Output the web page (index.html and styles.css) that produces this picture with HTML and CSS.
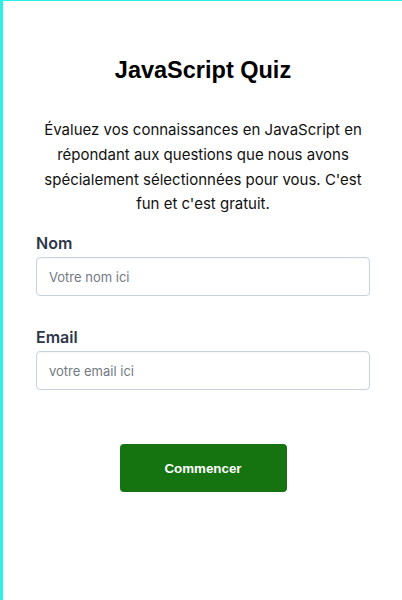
FILE: index.html
```html
<!DOCTYPE html>
<html lang="fr">
<head>
<meta charset="utf-8">
<title>JavaScript Quiz</title>
<link rel="stylesheet" href="styles.css">
</head>
<body>
<div class="page">
  <main class="quiz">
    <h1 class="title">JavaScript Quiz</h1>
    <p class="intro">Évaluez vos connaissances en JavaScript en répondant aux questions que nous avons spécialement sélectionnées pour vous. C'est fun et c'est gratuit.</p>
    <form class="form">
      <div class="field">
        <label class="label" for="nom">Nom</label>
        <input class="input" id="nom" type="text" placeholder="Votre nom ici">
      </div>
      <div class="field">
        <label class="label" for="email">Email</label>
        <input class="input" id="email" type="email" placeholder="votre email ici">
      </div>
      <div class="actions">
        <button class="btn" type="button">Commencer</button>
      </div>
    </form>
  </main>
</div>
</body>
</html>
```
FILE: styles.css
```css
* { box-sizing: border-box; }
html, body { margin: 0; padding: 0; background: #fff; }
.page {
  min-height: 600px;
  border-top: 1px solid #2bf0e6;
  border-left: 3px solid #2bf0e6;
  padding-left: 1px;
  font-family: Inter, "Noto Sans", sans-serif;
}
.quiz {
  width: 334px;
  margin: 0 auto;
  padding-top: 55px;
}
.title {
  margin: 0;
  font-family: "Liberation Sans", Arial, sans-serif;
  font-weight: 700;
  font-size: 23.5px;
  line-height: 28px;
  text-align: center;
  color: #000;
}
.intro {
  margin: 34px 0 0;
  font-size: 15px;
  line-height: 24.75px;
  text-align: center;
  color: #111;
}
.form {
  margin-top: 16px;
  display: flex;
  flex-direction: column;
  gap: 31px;
}
.field { display: flex; flex-direction: column; gap: 4px; }
.label {
  font-size: 16px;
  font-weight: 600;
  line-height: 20px;
  color: #2d3748;
}
.input {
  height: 39px;
  width: 100%;
  padding: 0 12px;
  border: 1px solid #c9d3df;
  border-radius: 4px;
  font-family: Inter, "Noto Sans", sans-serif;
  font-size: 13px;
  color: #333;
  background: #fff;
  box-shadow: inset 0 1px 2px rgba(0,0,0,0.04);
  outline: none;
}
.input::placeholder { color: #727a84; }
.actions { display: flex; justify-content: center; margin-top: 23px; }
.btn {
  width: 167px;
  height: 48px;
  border: 0;
  border-radius: 4px;
  background: #157410;
  color: #fff;
  font-family: "Liberation Sans", Arial, sans-serif;
  font-weight: 700;
  font-size: 13.333px;
}
```
